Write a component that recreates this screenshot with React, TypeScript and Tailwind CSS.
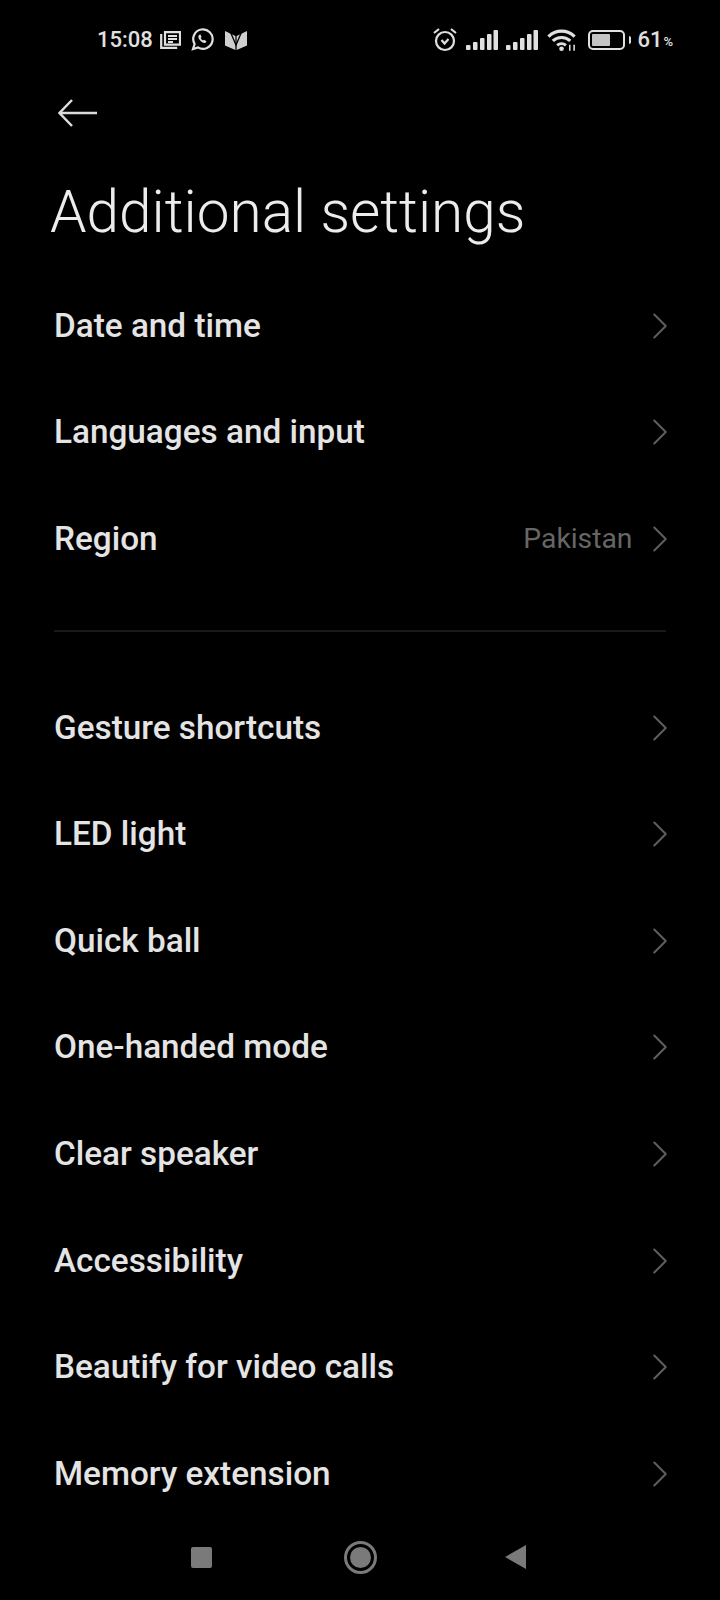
import { ChevronRight } from "lucide-react";

const firstGroup = [
  { label: "Date and time" },
  { label: "Languages and input" },
  { label: "Region", value: "Pakistan" },
];

const secondGroup = [
  { label: "Gesture shortcuts" },
  { label: "LED light" },
  { label: "Quick ball" },
  { label: "One-handed mode" },
  { label: "Clear speaker" },
  { label: "Accessibility" },
  { label: "Beautify for video calls" },
  { label: "Memory extension" },
];

function SignalIcon() {
  return (
    <svg width="32" height="20" viewBox="0 0 32 20" fill="#e0e0e0">
      <rect x="0" y="15" width="4.500" height="5" rx="1" />
      <rect x="7" y="12" width="4.500" height="8" rx="1" />
      <rect x="14" y="8" width="4.500" height="12" rx="1" />
      <rect x="21" y="4" width="4.500" height="16" rx="1" />
      <rect x="27.500" y="0" width="4.500" height="20" rx="1" />
    </svg>
  );
}

function StatusBar() {
  return (
    <div className="flex h-[55px] items-end justify-between pl-[97px] pr-[47px] text-[#e0e0e0]">
      <div className="flex items-center">
        <span className="text-[22px] leading-[28px] font-medium">15:08</span>
        <svg className="ml-[7px]" width="21" height="18" viewBox="0 0 21 18" fill="none" stroke="#e0e0e0" strokeWidth="2.200">
          <path d="M5 1.200h15v12.500H5z" />
          <path d="M1.200 3v13.800h16" />
          <path d="M8 5h9M8 8h9M8 11h5" strokeWidth="1.800" />
        </svg>
        <svg className="ml-[10px]" width="23" height="23" viewBox="0 0 23 23" fill="none" stroke="#e0e0e0" strokeWidth="2.200">
          <path d="M2 21l1.600-5A9.700 9.700 0 1 1 7 19.400z" />
          <path d="M8 7c-1 1-1 3 1 5.300s4 3.200 5.500 2.500l1-1.500-2.500-1.500-1 .8c-1-.5-1.800-1.400-2.300-2.500l.8-1L9.500 6.500z" fill="#e0e0e0" stroke="none" />
        </svg>
        <svg className="ml-[11px]" width="22" height="20" viewBox="0 0 22 20">
          <path d="M0 1l10.400 5V20L0 15.500z" fill="#cfcfcf" />
          <path d="M22 1L11.600 6V20L22 15.500z" fill="#cfcfcf" />
          <path d="M5 1l6 14L17 1" fill="none" stroke="#000" strokeWidth="1.300" />
        </svg>
      </div>
      <div className="flex items-center">
        <svg width="26" height="25" viewBox="0 0 26 25" fill="none" stroke="#e0e0e0" strokeWidth="2.200">
          <circle cx="13" cy="14" r="9" />
          <path d="M9.500 13l3 3.500 4-4.500" />
          <path d="M2 6l5-4M24 6l-5-4" />
        </svg>
        <div className="ml-[8px]">
          <SignalIcon />
        </div>
        <div className="ml-[8px]">
          <SignalIcon />
        </div>
        <svg className="ml-[9px]" width="31" height="24" viewBox="0 0 32 24" fill="none" stroke="#e0e0e0" strokeWidth="3.200">
          <path d="M1.500 8.500C9 1 21 1 28.500 8.500" />
          <path d="M6 13c5-4.800 13-4.800 18 0" />
          <path d="M10.500 17.500c2.600-2.200 6.400-2.200 9 0" />
          <circle cx="15" cy="21" r="2.400" fill="#e0e0e0" stroke="none" />
          <path d="M23.500 17v6M28 17v6" strokeWidth="1.600" />
        </svg>
        <div className="ml-[10px] flex items-center">
          <div className="flex h-[20px] w-[37px] items-center rounded-[5px] border-2 border-[#e0e0e0] p-[2px]">
            <div className="h-full w-[62%] rounded-[1px] bg-[#c4c4c4]" />
          </div>
          <div className="ml-[4px] h-[8px] w-[2px] rounded-r bg-[#e0e0e0]" />
        </div>
        <span className="ml-[6px] text-[22px] leading-[28px] font-medium">61</span>
        <span className="mt-[5px] ml-[1px] text-[13px] leading-[16px] font-medium">%</span>
      </div>
    </div>
  );
}

function SettingsRow({ label, value }: { label: string; value?: string }) {
  return (
    <div className="flex h-[106.6px] items-center justify-between">
      <span className="text-[33.3px] leading-[40px] font-medium text-[#e4e4e4]">{label}</span>
      <div className="flex items-center">
        {value && <span className="mr-[4px] text-[28.3px] leading-[36px] text-[#666666]">{value}</span>}
        <ChevronRight className="-mr-[16.5px] h-[46px] w-[46px] text-[#5e5e5e]" strokeWidth={1.05} />
      </div>
    </div>
  );
}

export default function App() {
  return (
    <div
      className="flex h-[1600px] w-[720px] flex-col overflow-hidden bg-black"
      style={{ fontFamily: "Roboto, sans-serif" }}
    >
      <StatusBar />
      <div className="pt-[45px] pl-[58px]">
        <svg className="block" width="40" height="28" viewBox="0 0 40 28" fill="none" stroke="#dcdcdc" strokeWidth="2.500">
          <path d="M1 14h38" />
          <path d="M14 1L1.500 14 14 27" />
        </svg>
      </div>
      <h1 className="mt-[49.5px] pl-[50px] text-[58.5px] leading-[72px] font-light text-[#ececec]">Additional settings</h1>
      <div className="mt-[24px] px-[54px]">
        {firstGroup.map((row) => (
          <SettingsRow key={row.label} {...row} />
        ))}
        <div className="mt-[38px] mb-[42px] h-[2px] bg-[#191919]" />
        {secondGroup.map((row) => (
          <SettingsRow key={row.label} {...row} />
        ))}
      </div>
      <div className="mt-auto mb-[13px] flex h-[60px] shrink-0 items-center pl-[191px]">
        <div className="h-[21px] w-[21px] rounded-[2px] bg-[#7a7a7a]" />
        <div className="ml-[132px] flex h-[33px] w-[33px] items-center justify-center rounded-full border-[3px] border-[#7a7a7a]">
          <div className="h-[21px] w-[21px] rounded-full bg-[#7a7a7a]" />
        </div>
        <svg className="ml-[128px]" width="21" height="24" viewBox="0 0 21 24">
          <path d="M21 0v24L0 12z" fill="#7a7a7a" />
        </svg>
      </div>
    </div>
  );
}
